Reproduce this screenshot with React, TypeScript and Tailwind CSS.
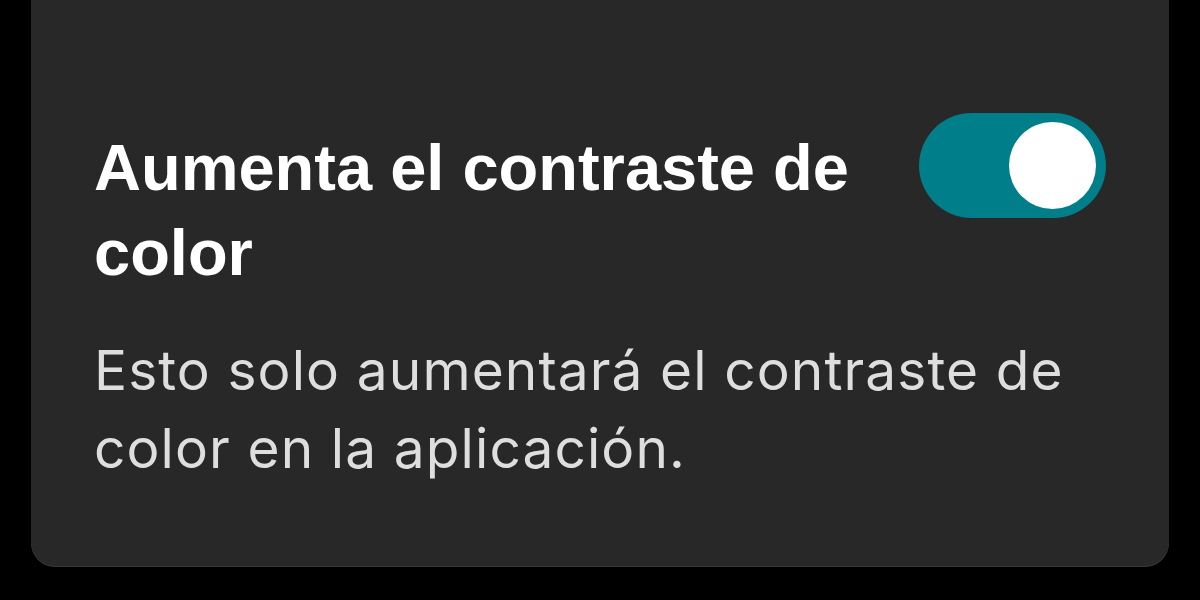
import React from 'react';

const Toggle: React.FC<{ on: boolean }> = ({ on }) => (
  <div
    className={`flex h-[105px] w-[187px] shrink-0 items-center rounded-full px-[10px] ${
      on ? 'justify-end bg-[#007e89]' : 'justify-start bg-[#5a5a5a]'
    }`}
  >
    <div className="h-[87px] w-[87px] rounded-full bg-white" />
  </div>
);

export default function App() {
  return (
    <div className="h-[600px] w-full bg-black">
      <div className="ml-[31px] mr-[31px] h-[566px] rounded-b-[24px] bg-[#282828] px-[63px] pt-[113px] shadow-[0_1px_0_#3a3a3a]">
        {/* Ajuste de contraste */}
        <div className="flex items-start justify-between gap-8">
          <h2 className="mt-[12px] text-[65px] font-bold leading-[85px] text-white [font-family:'Liberation_Sans',Arial,sans-serif]">
            Aumenta el contraste de
            <br />
            color
          </h2>
          <Toggle on />
        </div>
        <p className="mt-[36px] text-[55px] leading-[78px] tracking-[1.1px] text-[#dedede] [font-family:Inter,'Liberation_Sans',sans-serif]">
          Esto solo aumentará el contraste de
          <br />
          color en la aplicación.
        </p>
      </div>
    </div>
  );
}
